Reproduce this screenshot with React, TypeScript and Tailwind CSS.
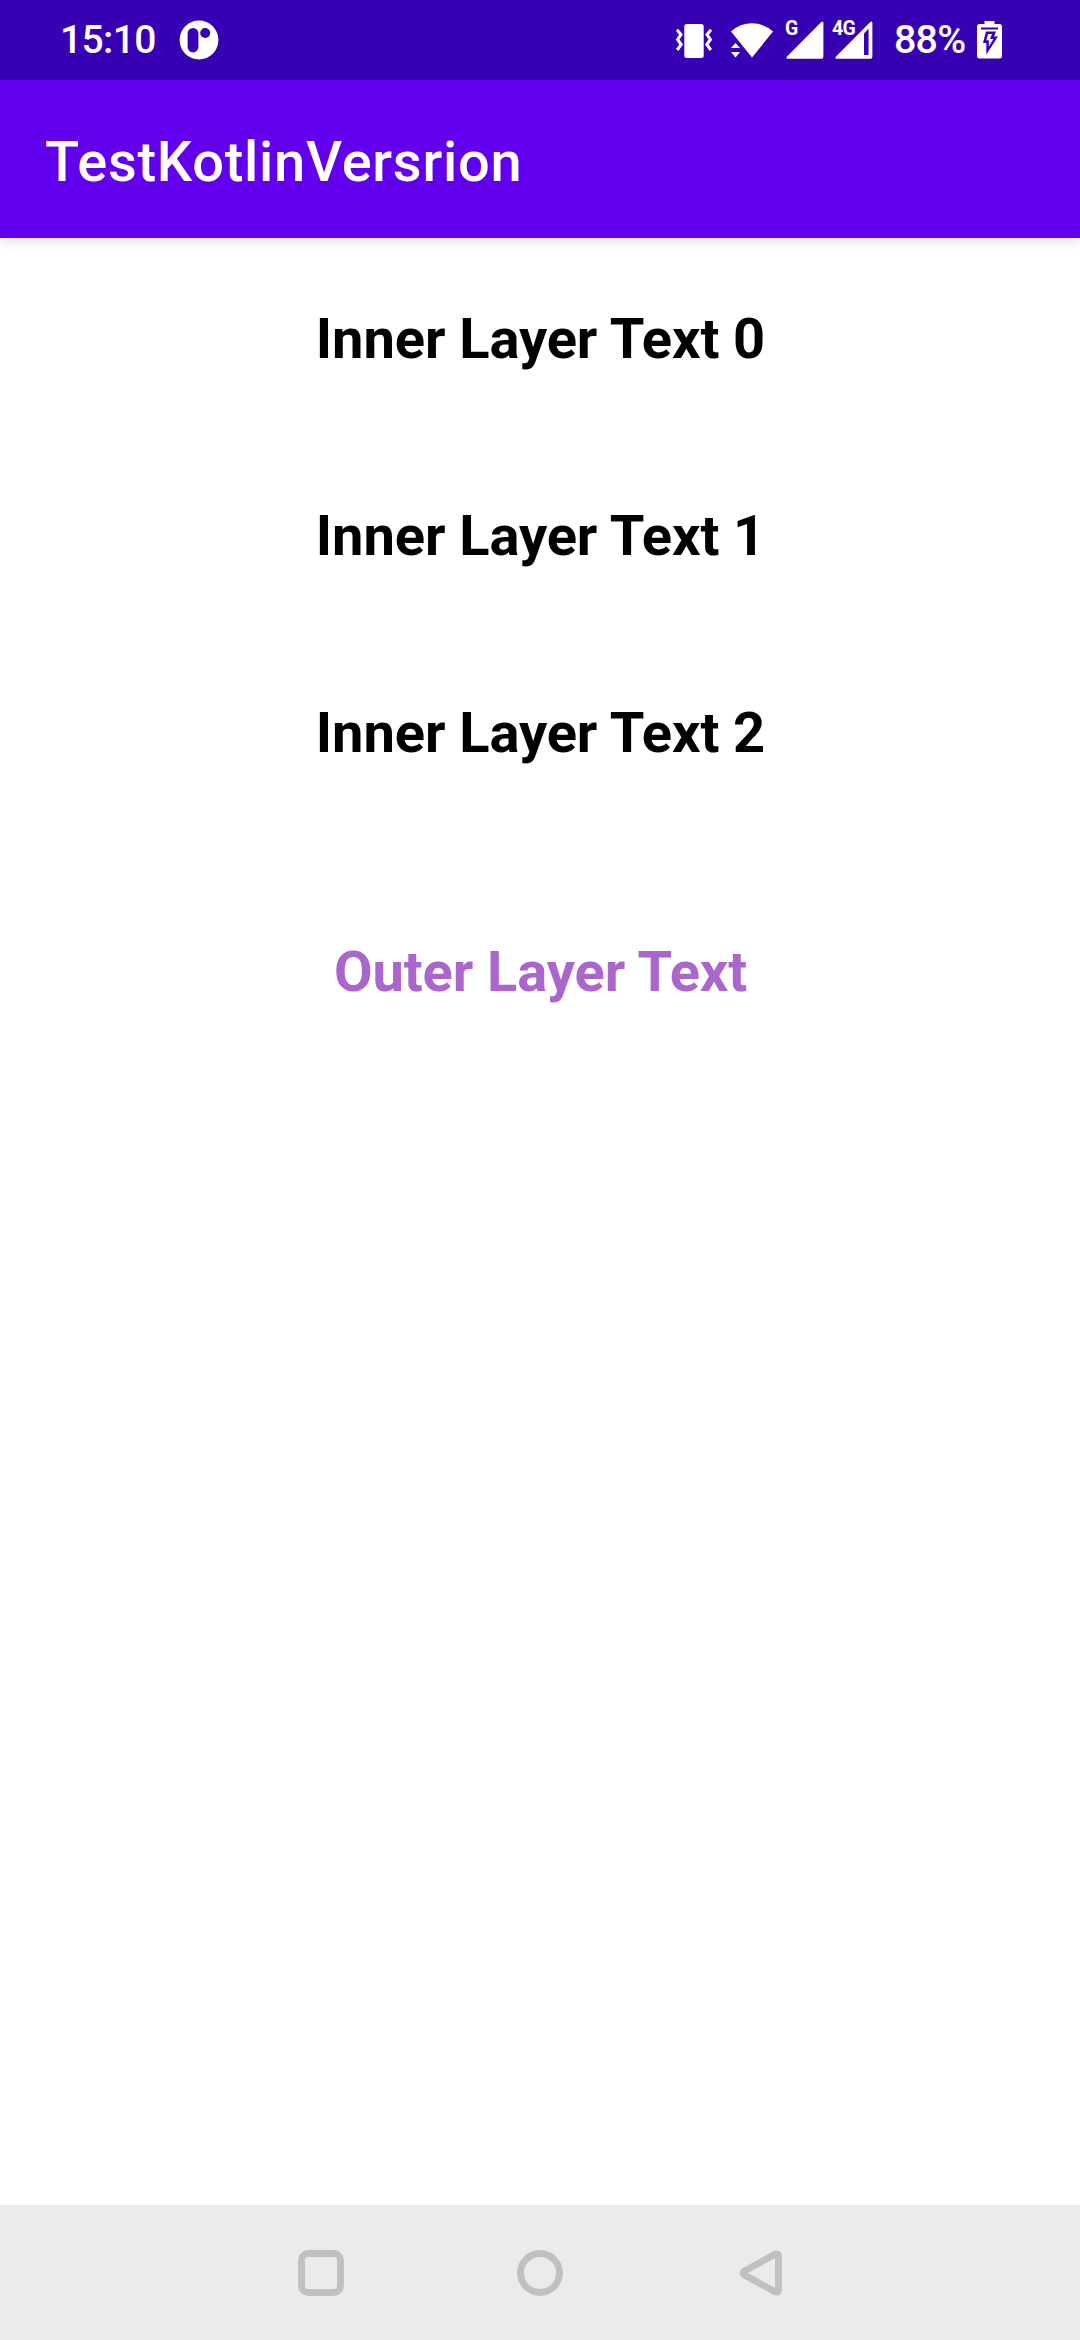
import React from "react";

const rows = ["Inner Layer Text 0", "Inner Layer Text 1", "Inner Layer Text 2"];

function ParkingIcon() {
  return (
    <svg className="ml-[21px] h-10 w-10" viewBox="0 0 40 40">
      <circle cx="20" cy="20" r="19.4" fill="#fff" />
      <rect x="8.6" y="8" width="10.8" height="24.4" rx="5.4" fill="#3700b3" />
      <circle cx="26.2" cy="13" r="5" fill="#3700b3" />
    </svg>
  );
}

function VibrateIcon() {
  return (
    <svg className="h-[38px] w-10" viewBox="674 21 40 38">
      <rect x="684.3" y="24" width="19.4" height="34" rx="2.5" fill="#fff" />
      <path
        d="M677 29.800L681 34.500L677.600 39.500L681.200 44.500L677.200 50M711 29.800L707 34.500L710.400 39.500L706.800 44.500L710.800 50"
        fill="none"
        stroke="#fff"
        strokeWidth="3"
      />
    </svg>
  );
}

function WifiIcon() {
  return (
    <svg className="ml-[15px] h-[38px] w-[46px]" viewBox="729 21 46 38">
      <path d="M731 31.500Q740 23.300 752 23.300T773 31.500L752 57.500Z" fill="#fff" />
      <path d="M731 48l4.500-5 4.500 5zM731 52h9l-4.500 5.400z" fill="#fff" />
    </svg>
  );
}

function SignalIcon({ label, hollow }: { label: string; hollow?: boolean }) {
  return (
    <div className="relative h-[38px] w-[38px]">
      <svg className="h-[38px] w-[38px]" viewBox="0 0 38 38">
        <path d="M1 35.500L35.300 1Q37.400-.5 37.400 2V35.500Q37.400 37.700 35.500 37.700H1.300Q-.5 37.300 1 35.500Z" fill="#fff" />
        {hollow && <path d="M29 12.500L33.600 7.500V34H29Z" fill="#3700b3" />}
      </svg>
      <span
        className={
          "absolute top-[-2px] text-[19.5px] leading-[20px] font-bold tracking-[-0.6px] " +
          (hollow ? "left-[-3px]" : "left-[-1px]")
        }
      >
        {label}
      </span>
    </div>
  );
}

function BatteryIcon() {
  return (
    <svg className="ml-3 h-[38px] w-[26px]" viewBox="0.5 0 26 38">
      <path d="M8 0h10v3h5q2.500 0 2.500 2.500V35q0 2.500-2.500 2.500H3Q.5 37.500.5 35V5.500Q.5 3 3 3h5z" fill="#fff" />
      <path d="M4.500 7.500H21.500" stroke="#3700b3" strokeWidth="2" />
      <path d="M9.500 10.500h10l-2 5h4L9.800 33.500V22H6.500z" fill="#3700b3" />
      <path d="M11.500 13h4l-2 5h3.500L12.300 25.500v-6.300H9.800z" fill="#fff" />
    </svg>
  );
}

export default function App() {
  return (
    <div className="flex h-[2340px] w-[1080px] flex-col overflow-hidden bg-white font-['Roboto',sans-serif]">
      <header className="relative z-20 flex h-20 shrink-0 items-center bg-[#3700b3] text-white">
        <time className="ml-[60px] w-[98px] text-[39px] leading-[46px] font-medium tracking-[-0.65px]">15:10</time>
        <ParkingIcon />
        <div className="ml-auto flex items-center pr-[77px]">
          <VibrateIcon />
          <WifiIcon />
          <div className="ml-[11px] flex gap-[11px]">
            <SignalIcon label="G" />
            <SignalIcon label="4G" hollow />
          </div>
          <span className="ml-[21px] w-[71px] text-[39.375px] leading-[46px] font-medium tracking-[-0.8px] whitespace-nowrap">
            88%
          </span>
          <BatteryIcon />
        </div>
      </header>

      <div className="relative z-10 flex h-[158px] shrink-0 items-center bg-[#6200ee] pt-[5px] pl-[45px] shadow-[0_2px_12px_rgba(0,0,0,0.16)]">
        <h1 className="text-[56px] leading-[66px] font-medium tracking-[0.72px] text-white">
          TestKotlinVersrion
        </h1>
      </div>

      <main className="flex grow flex-col items-center pt-[2px] pl-px text-[56px] font-bold tracking-[-0.07px]">
        {rows.map((text) => (
          <p key={text} className="flex h-[197px] items-center leading-[66px] text-black">
            {text}
          </p>
        ))}
        <p className="mt-[42px] flex h-[197px] items-center leading-[66px] text-[#aa66cc]">Outer Layer Text</p>
      </main>

      <nav className="flex h-[135px] shrink-0 items-center justify-center gap-[173px] bg-[#ebebeb]">
        <svg className="h-[46px] w-[46px]" viewBox="0 0 46 46" fill="none" stroke="#c0c0c0" strokeWidth="6.800">
          <rect x="3.500" y="3.500" width="39" height="39" rx="6.500" />
        </svg>
        <svg className="h-[46px] w-[46px]" viewBox="0 0 46 46" fill="none" stroke="#c0c0c0" strokeWidth="6.800">
          <circle cx="23" cy="23" r="19.500" />
        </svg>
        <svg className="h-[46px] w-[46px]" viewBox="0 0 46 46" fill="none" stroke="#c0c0c0" strokeWidth="6.800" strokeLinejoin="round">
          <path d="M39.300 4.100L8.500 20.900Q5.500 23 8.500 25.100L39.300 41.900Q42.500 43 42.500 40V6Q42.500 3 39.300 4.100Z" />
        </svg>
      </nav>
    </div>
  );
}
